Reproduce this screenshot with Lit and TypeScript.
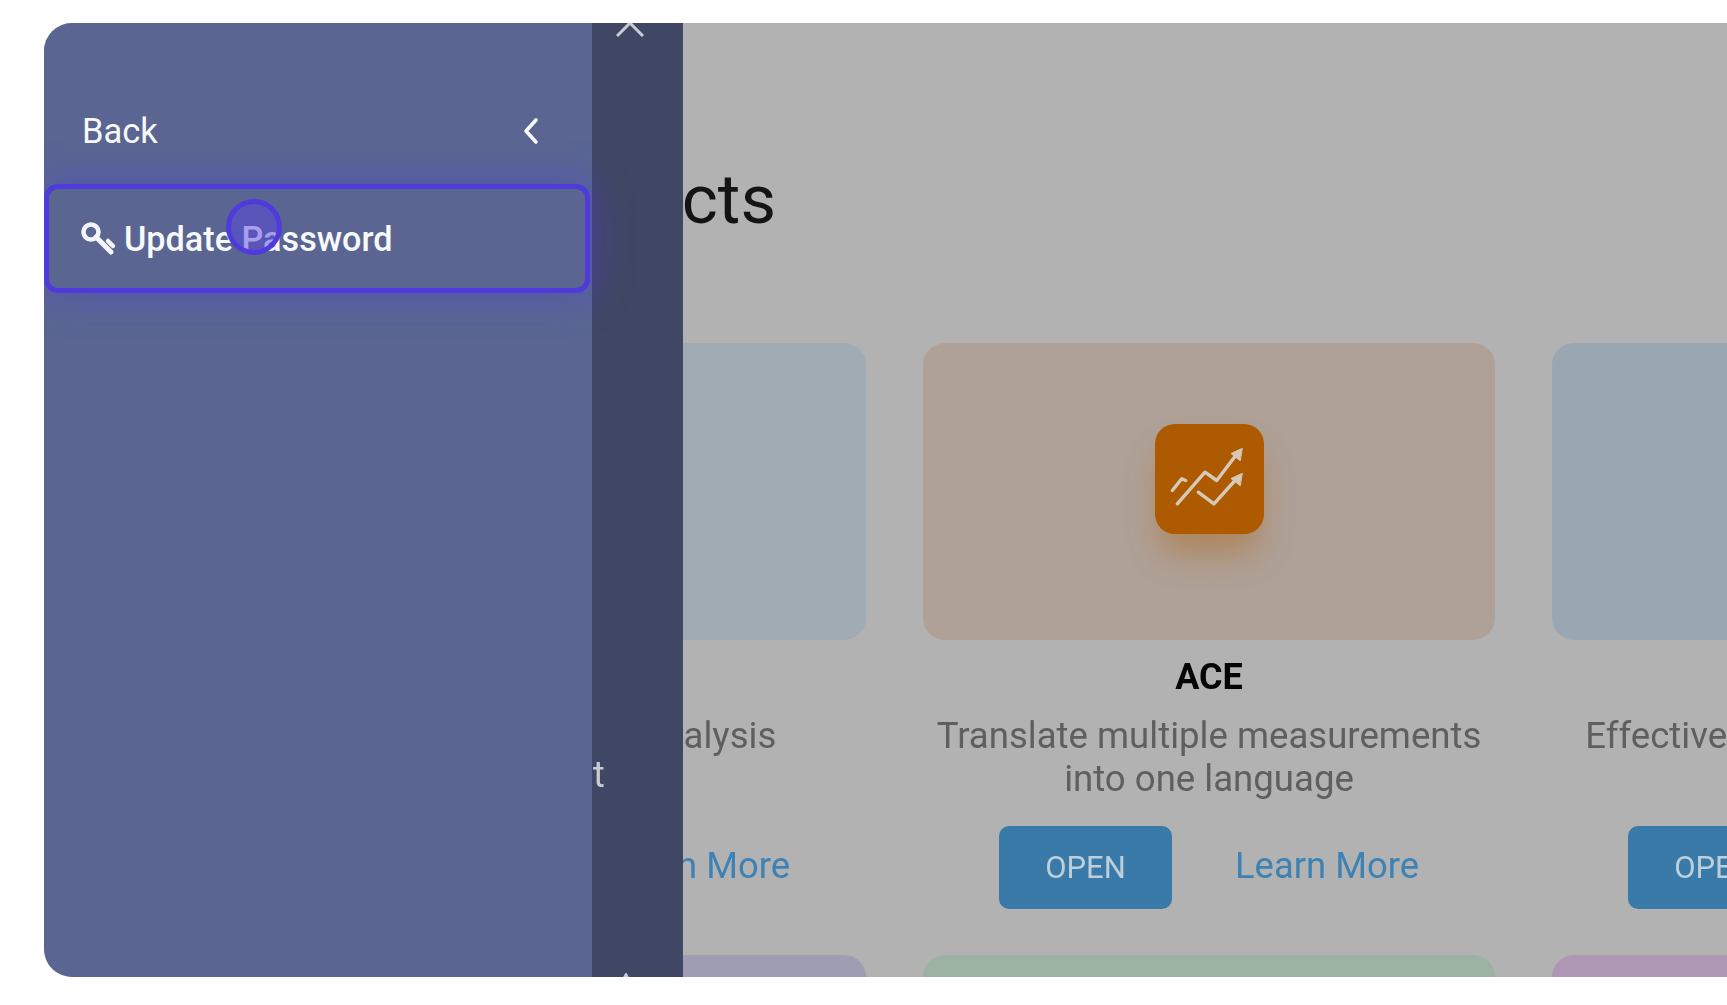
import { LitElement, html, css } from "lit";
import { customElement } from "lit/decorators.js";

interface Card { cls: string; title: string; desc: string[]; tile?: boolean; }

const cards: Card[] = [
  { cls: "c1", title: "Insights", desc: ["Detailed design analysis"] },
  { cls: "c2", title: "ACE", desc: ["Translate multiple measurements", "into one language"], tile: true },
  { cls: "c3", title: "Plan", desc: ["Effective supplier management"] },
];

@customElement("app-root")
export class AppRoot extends LitElement {
  static styles = css`
    :host { display: block; height: 1005px; background: #fff; overflow: hidden; font-family: Roboto, "Liberation Sans", sans-serif; }
    .page { padding: 23px 0 28px 44px; height: 1005px; box-sizing: border-box; }
    .frame { display: flex; height: 954px; overflow: hidden; border-radius: 28px 0 0 28px; background: #b2b2b2; filter: blur(0.6px); }
    .drawer { flex: 0 0 548px; background: #5a6691; color: #f8f9fb; position: relative; z-index: 2; padding-top: 76px; box-sizing: border-box; }
    .back { display: flex; align-items: center; justify-content: space-between; height: 64px; padding: 0 52px 0 38px; font-size: 34.5px; margin-bottom: 21px; }
    .back svg { width: 18px; height: 28px; }
    .spot { position: relative; width: 546px; height: 109px; box-sizing: border-box; border: 5px solid #4f3bdc; border-radius: 14px; box-shadow: 0 0 36px 6px rgba(80, 60, 220, .38); display: flex; align-items: center; padding: 1px 0 0 31px; gap: 6px; font-size: 34.2px; font-weight: 500; }
    .spot svg { width: 38px; height: 36px; }
    .click { position: absolute; left: 177px; top: 10px; width: 56px; height: 56px; box-sizing: border-box; border-radius: 50%; border: 5px solid #4f3bdc; background: rgba(88, 68, 225, .5); }
    .rail { flex: 0 0 91px; background: #404764; color: #c9cbd4; position: relative; z-index: 1; display: flex; flex-direction: column; }
    .rail .x { width: 28px; height: 28px; margin: -14px 0 0 24px; flex: none; }
    .rail .t { font-size: 36px; line-height: 42px; padding-left: 1px; margin-top: 717px; }
    .rail .tip { width: 10px; height: 8px; margin: auto 0 -4px 29px; flex: none; }
    .main { flex: 1; min-width: 0; overflow: hidden; }
    .inner { margin-left: -389px; width: 1800px; }
    h1 { margin: 0; width: 482px; height: 320px; box-sizing: border-box; padding-top: 137px; text-align: right; font-size: 69px; line-height: 80px; font-weight: 400; color: #141414; white-space: nowrap; direction: rtl; }
    .grid { display: grid; grid-template-columns: repeat(3, 572px); column-gap: 57px; row-gap: 46px; }
    .card { display: flex; flex-direction: column; align-items: center; }
    .img { width: 572px; height: 297px; border-radius: 22px; display: flex; align-items: flex-start; justify-content: center; padding-top: 81px; box-sizing: border-box; }
    .c1 .img { background: #a0abb4; }
    .c2 .img { background: #afa197; }
    .c3 .img { background: #99a7b3; }
    .c4 .img { background: #9f9db3; }
    .c5 .img { background: #9cb2a2; }
    .c6 .img { background: #af98b5; }
    .tile { width: 109px; height: 110px; border-radius: 20px; background: #ae5a00; box-shadow: 0 24px 34px -6px rgba(174, 90, 0, .42); }
    .tile svg { display: block; width: 109px; height: 110px; }
    .title { font-size: 36px; font-weight: 700; line-height: 44px; margin-top: 15px; color: #050505; }
    .desc { margin-top: 14.5px; height: 87px; text-align: center; font-size: 36.6px; line-height: 43px; color: #5f5f5f; white-space: nowrap; }
    .desc div { height: 43px; }
    .row { display: flex; align-items: center; gap: 63px; margin-top: 25.5px; }
    .open { width: 173px; height: 83px; border-radius: 10px; background: #3a7aa8; color: #bccfda; font-size: 31px; font-weight: 400; display: flex; align-items: center; justify-content: center; }
    .learn { font-size: 36.4px; color: #3e82b5; margin-top: -5px; white-space: nowrap; }
  `;

  render() {
    return html`<div class="page"><div class="frame">
      <aside class="drawer">
        <div class="back"><span>Back</span>
          <svg viewBox="0 0 18 28"><polyline points="14,3 4,14 14,25" fill="none" stroke="#f8f9fb" stroke-width="3.6" stroke-linecap="round" stroke-linejoin="round"/></svg>
        </div>
        <div class="spot">
          <svg viewBox="0 0 38 36" fill="none" stroke="#f4f5f8" stroke-linecap="round"><circle cx="11" cy="11" r="7.5" stroke-width="4.5"/><path d="M16 16 L31 31" stroke-width="5"/><path d="M28 20 L33 25" stroke-width="4.5"/></svg>
          <span>Update Password</span>
          <div class="click"></div>
        </div>
      </aside>
      <div class="rail">
        <svg class="x" viewBox="0 0 28 28"><path d="M1 1 L27 27 M27 1 L1 27" stroke="#c9cbd4" stroke-width="3" fill="none"/></svg>
        <div class="t">t</div>
        <svg class="tip" viewBox="0 0 10 8"><path d="M1 8 L5 1 L9 8" stroke="#c9cbd4" stroke-width="2" fill="none"/></svg>
      </div>
      <main class="main"><div class="inner">
        <h1>Our Products</h1>
        <div class="grid">
          ${cards.map((c) => html`<section class="card ${c.cls}">
            <div class="img">${c.tile ? html`<div class="tile">
              <svg viewBox="0 0 109 109" fill="none" stroke="#d6c9b8" stroke-width="3.4" stroke-linecap="round" stroke-linejoin="round">
                <polyline points="22.3,79.3 50,47.7 61.7,56 80,32"/>
                <polyline points="43.3,67.7 59,79.3 80,56"/>
                <polyline points="17.3,66 26.7,54.3 30.7,56"/>
                <polygon points="87,24 76,29 85,36" fill="#d6c9b8" stroke-width="1"/>
                <polygon points="87,49 76,54 85,61" fill="#d6c9b8" stroke-width="1"/>
              </svg></div>` : ""}</div>
            <div class="title">${c.title}</div>
            <div class="desc">${c.desc.map((d) => html`<div>${d}</div>`)}</div>
            <div class="row"><div class="open">OPEN</div><div class="learn">Learn More</div></div>
          </section>`)}
          <section class="card c4"><div class="img"></div></section>
          <section class="card c5"><div class="img"></div></section>
          <section class="card c6"><div class="img"></div></section>
        </div>
      </div></main>
    </div></div>`;
  }
}
